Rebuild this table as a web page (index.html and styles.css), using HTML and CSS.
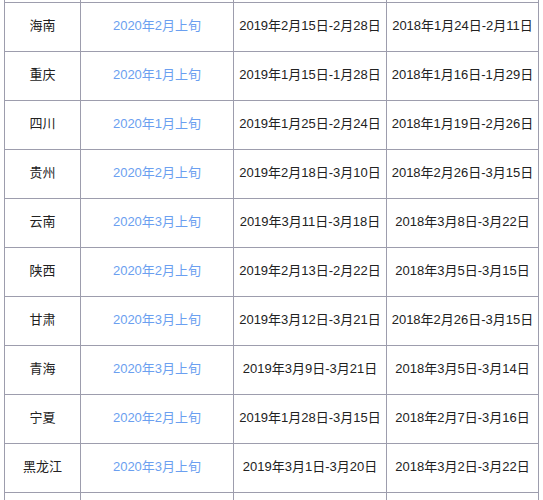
FILE: index.html
```html
<!DOCTYPE html>
<html>

<head>
<meta charset="utf-8">
<link rel="stylesheet" href="styles.css">
</head>

<body>

<table class="dates">
  <tr class="edge top"><td></td><td></td><td></td><td></td></tr>
  <tr><td>海南</td><td class="month">2020年2月上旬</td><td>2019年2月15日-2月28日</td><td>2018年1月24日-2月11日</td></tr>
  <tr><td>重庆</td><td class="month">2020年1月上旬</td><td>2019年1月15日-1月28日</td><td>2018年1月16日-1月29日</td></tr>
  <tr><td>四川</td><td class="month">2020年1月上旬</td><td>2019年1月25日-2月24日</td><td>2018年1月19日-2月26日</td></tr>
  <tr><td>贵州</td><td class="month">2020年2月上旬</td><td>2019年2月18日-3月10日</td><td>2018年2月26日-3月15日</td></tr>
  <tr><td>云南</td><td class="month">2020年3月上旬</td><td>2019年3月11日-3月18日</td><td>2018年3月8日-3月22日</td></tr>
  <tr><td>陕西</td><td class="month">2020年2月上旬</td><td>2019年2月13日-2月22日</td><td>2018年3月5日-3月15日</td></tr>
  <tr><td>甘肃</td><td class="month">2020年3月上旬</td><td>2019年3月12日-3月21日</td><td>2018年2月26日-3月15日</td></tr>
  <tr><td>青海</td><td class="month">2020年3月上旬</td><td>2019年3月9日-3月21日</td><td>2018年3月5日-3月14日</td></tr>
  <tr><td>宁夏</td><td class="month">2020年2月上旬</td><td>2019年1月28日-3月15日</td><td>2018年2月7日-3月16日</td></tr>
  <tr><td>黑龙江</td><td class="month">2020年3月上旬</td><td>2019年3月1日-3月20日</td><td>2018年3月2日-3月22日</td></tr>
  <tr class="edge"><td></td><td></td><td></td><td></td></tr>
</table>

</body>
</html>
```

FILE: styles.css
```css
body {
	margin: 0;
	font-family: "Liberation Sans", Arial, "Noto Sans CJK SC", sans-serif;
	font-size: 13px;
	color: #222222;
	background: #ffffff;
}

.dates {
	border-collapse: collapse;
	margin-left: 4px;
	table-layout: fixed;
	width: 535px;
}

.dates td {
	border: 1px solid #9d9dad;
	height: 46px;
	padding: 0 0 2px 0;
	line-height: 16px;
	text-align: center;
	vertical-align: middle;
	white-space: nowrap;
}

.dates td:nth-child(1) {
	width: 75px;
}

.dates td:nth-child(2),
.dates td:nth-child(3) {
	width: 152px;
}

.dates td.month {
	color: #6b9ff0;
}

/* rows cut by the edge of the view */
.dates tr.edge td {
	height: 2px;
	padding: 0;
	border-bottom: 0;
}

.dates tr.edge.top td {
	border-top: 0;
	border-bottom: 1px solid #9d9dad;
}

.dates tr.edge:last-child td {
	height: 20px;
}
```
